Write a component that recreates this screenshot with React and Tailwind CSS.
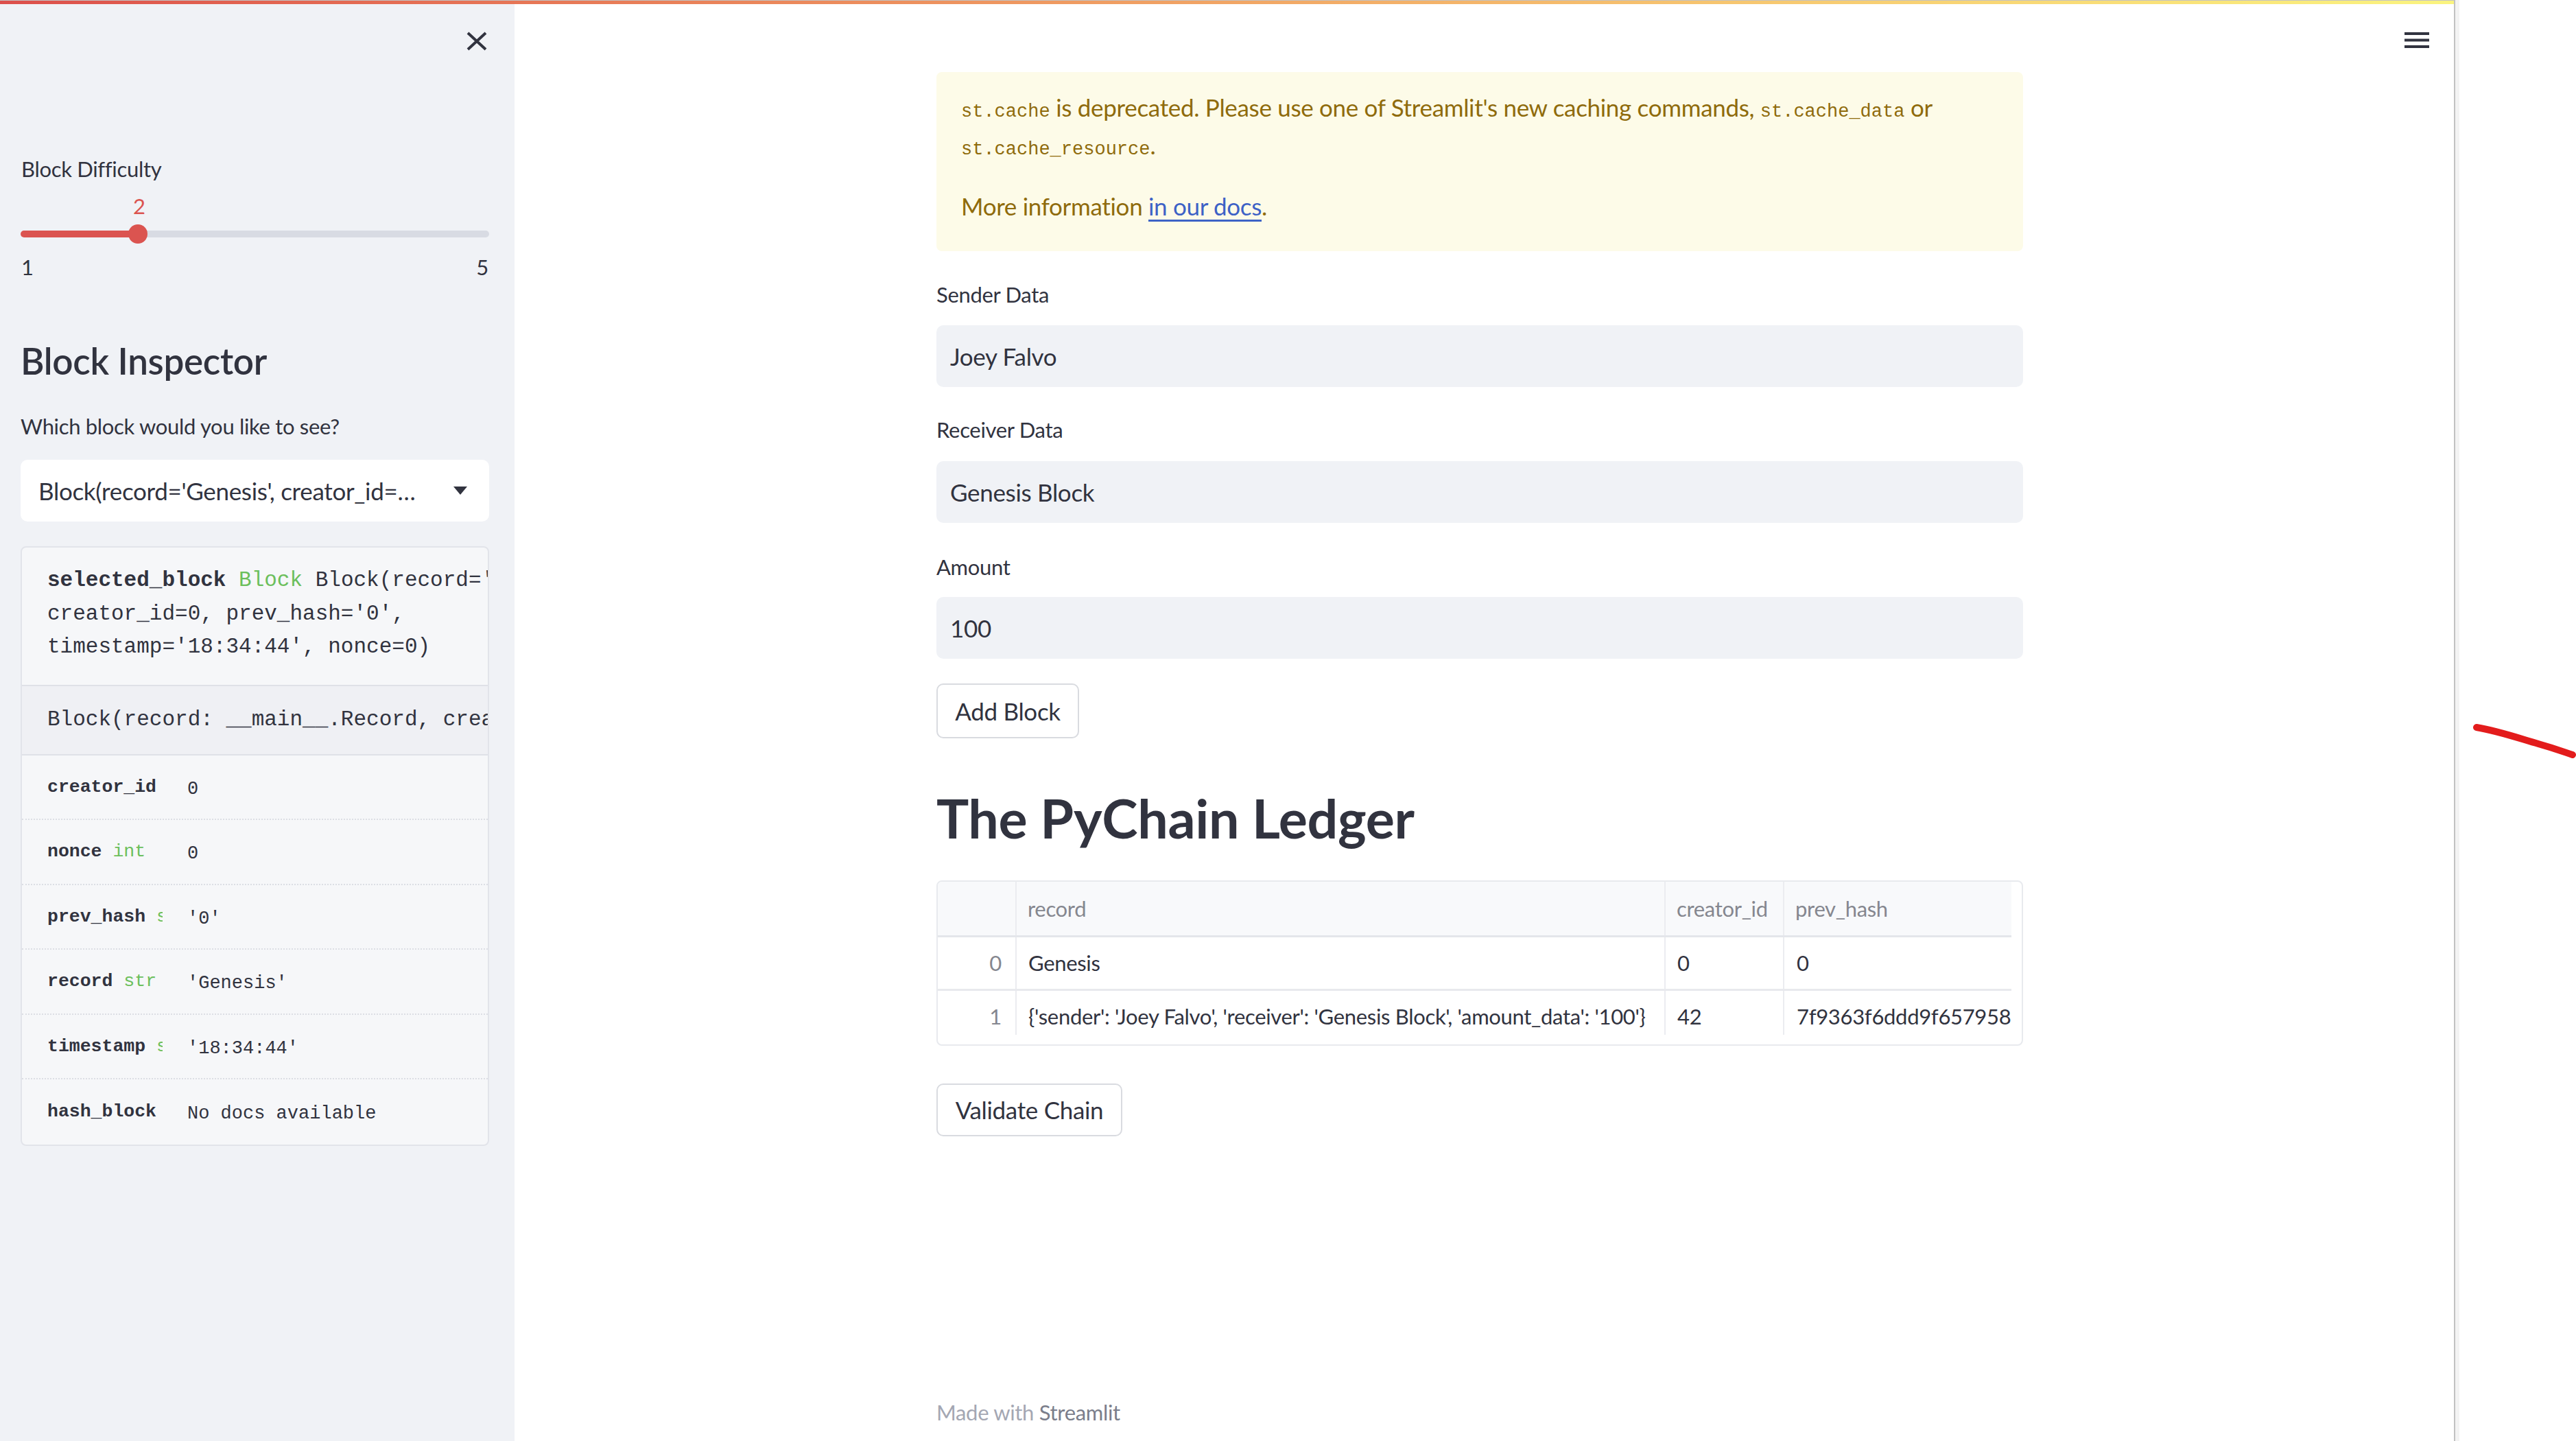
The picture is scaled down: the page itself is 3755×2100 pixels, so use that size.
import React from 'react';

const sans = "font-['Lato','Liberation_Sans',sans-serif] tracking-[-0.02em]";
const mono = "font-['Liberation_Mono','DejaVu_Sans_Mono',monospace] tracking-normal";

const inspectRows = [
    { name: 'creator_id', type: '', value: '0' },
    { name: 'nonce', type: 'int', value: '0' },
    { name: 'prev_hash', type: 'str', value: "'0'" },
    { name: 'record', type: 'str', value: "'Genesis'" },
    { name: 'timestamp', type: 'str', value: "'18:34:44'" },
    { name: 'hash_block', type: '', value: 'No docs available' },
];

const ledger = [
    { idx: 0, record: 'Genesis', creator_id: '0', prev_hash: '0' },
    {
        idx: 1,
        record: "{'sender': 'Joey Falvo', 'receiver': 'Genesis Block', 'amount_data': '100'}",
        creator_id: '42',
        prev_hash: '7f9363f6ddd9f65795879ae0b1b5a2c9',
    },
];

const CloseIcon = () => (
    <svg width="30" height="28" viewBox="0 0 30 28">
        <path d="M2 2 L28 26 M28 2 L2 26" stroke="#31333f" strokeWidth="4" strokeLinecap="butt" />
    </svg>
);

const MenuIcon = () => (
    <svg width="36" height="24" viewBox="0 0 36 24">
        <rect x="0" y="0" width="36" height="4" fill="#31333f" />
        <rect x="0" y="9.5" width="36" height="4" fill="#31333f" />
        <rect x="0" y="19" width="36" height="4" fill="#31333f" />
    </svg>
);

const Sidebar = () => (
    <aside className={`w-[750px] shrink-0 bg-[#f0f2f6] flex flex-col pl-[30px] pr-[37px] text-[#31333f] ${sans}`}>
        <div className="h-[108px] flex items-center justify-end pr-[3px]">
            <CloseIcon />
        </div>

        <div className="mt-[112px] text-[31px] leading-[40px] pl-[1px]">Block Difficulty</div>

        {/* slider */}
        <div className="mt-[14px] text-[31px] leading-[40px] text-[#db5450] pl-[164px]">2</div>
        <div className="mt-[7px] h-[27px] flex items-center">
            <div className="w-[171px] h-[10px] rounded-l-full bg-[#db5450]" />
            <div className="relative z-10 w-[28px] h-[28px] -ml-[14px] rounded-full bg-[#db5450]" />
            <div className="flex-1 h-[10px] -ml-[14px] rounded-r-full bg-[#d8dbe3]" />
        </div>
        <div className="mt-[15px] flex justify-between text-[31px] leading-[40px] px-[1px]">
            <span>1</span>
            <span>5</span>
        </div>

        <h2 className="mt-[83px] text-[53px] leading-[68px] font-semibold">Block Inspector</h2>
        <div className="mt-[41px] text-[31px] leading-[40px]">Which block would you like to see?</div>

        {/* selectbox */}
        <div className="mt-[29px] h-[90px] bg-white rounded-[10px] flex items-center pl-[26px] pr-[32px]">
            <div className="flex-1 min-w-0 truncate text-[35px] leading-[50px]">
                Block(record='Genesis', creator_id=0, prev_hash='0', timestamp='18:34:44', nonce=0)
            </div>
            <svg width="20" height="12" viewBox="0 0 20 12" className="ml-[40px] shrink-0">
                <path d="M0 0 L20 0 L10 12 Z" fill="#31333f" />
            </svg>
        </div>

        {/* help / inspect box */}
        <div className={`mt-[36px] border-2 border-[#e2e4ea] rounded-[8px] bg-[#f6f7f9] overflow-hidden ${mono}`}>
            <div className="pl-[37px] pt-[24px] pb-[30px] text-[31px] leading-[48.5px] whitespace-nowrap overflow-hidden">
                <div>
                    <span className="font-bold">selected_block</span>{' '}
                    <span className="text-[#6cbf5c]">Block</span> Block(record='Genesis',
                </div>
                <div>creator_id=0, prev_hash='0',</div>
                <div>timestamp='18:34:44', nonce=0)</div>
            </div>
            <div className="h-[103px] border-t-2 border-b-2 border-[#dfe1e7] bg-[#eff0f4] flex items-center pl-[37px] text-[31px] leading-[48.5px] whitespace-nowrap overflow-hidden">
                Block(record: __main__.Record, creator_id: int, prev_hash: str = '0', timestamp: str)
            </div>
            {inspectRows.map((row, i) => (
                <div
                    key={row.name}
                    className={`h-[94.5px] flex items-center pl-[37px] ${i < inspectRows.length - 1 ? 'border-b-2 border-dotted border-[#dcdee4]' : ''}`}
                >
                    <div className="w-[168px] shrink-0 overflow-hidden whitespace-nowrap text-[26.5px] leading-[36px] font-bold">
                        {row.name}
                        {row.type && <span className="font-normal text-[#6cbf5c]"> {row.type}</span>}
                    </div>
                    <div className="ml-[36px] text-[27px] leading-[36px] pt-[6px] whitespace-nowrap">{row.value}</div>
                </div>
            ))}
        </div>
    </aside>
);

const Label = ({ children, className = '' }) => (
    <div className={`text-[31px] leading-[50px] ${className}`}>{children}</div>
);

const Input = ({ value, className = '' }) => (
    <div className={`h-[90px] rounded-[10px] bg-[#f0f2f6] flex items-center pl-[20px] text-[35px] ${className}`}>{value}</div>
);

const Button = ({ children, className = '' }) => (
    <button className={`border-2 border-[#d9dbe0] rounded-[10px] bg-white text-[35px] text-[#31333f] flex items-center justify-center ${className}`}>
        {children}
    </button>
);

const Ledger = () => (
    <div className="mt-[40px] h-[241px] border-2 border-[#e8eaee] rounded-[8px] overflow-hidden">
        <div className="w-[1565px] h-[223px] overflow-hidden text-[31px]">
            <div className="flex h-[81px] bg-[#f8f9fb] border-b-[3px] border-[#e4e6eb] text-[#85878f]">
                <div className="w-[115px] shrink-0 border-r-2 border-[#ebecf0]" />
                <div className="w-[946px] shrink-0 border-r-2 border-[#ebecf0] flex items-center pl-[16px]">record</div>
                <div className="w-[173px] shrink-0 border-r-2 border-[#ebecf0] flex items-center pl-[16px]">creator_id</div>
                <div className="w-[331px] shrink-0 flex items-center pl-[16px]">prev_hash</div>
            </div>
            {ledger.map((row) => (
                <div key={row.idx} className="flex h-[78px] border-b-[3px] border-[#e8e9ed]">
                    <div className="w-[115px] shrink-0 border-r-2 border-[#ebecf0] flex items-center justify-end pr-[20px] text-[#85878f]">
                        {row.idx}
                    </div>
                    <div className="w-[946px] shrink-0 border-r-2 border-[#ebecf0] flex items-center pl-[17px] whitespace-nowrap overflow-hidden">
                        {row.record}
                    </div>
                    <div className="w-[173px] shrink-0 border-r-2 border-[#ebecf0] flex items-center pl-[17px]">{row.creator_id}</div>
                    <div className="w-[331px] shrink-0 flex items-center pl-[18px] whitespace-nowrap overflow-hidden">{row.prev_hash}</div>
                </div>
            ))}
        </div>
    </div>
);

const Main = () => (
    <main className={`flex-1 relative bg-white text-[#31333f] ${sans}`}>
        <div className="absolute right-[36px] top-[41px]">
            <MenuIcon />
        </div>

        <div className="ml-[615px] w-[1584px] flex flex-col pt-[99px]">
            {/* deprecation warning */}
            <div className="h-[261px] rounded-[8px] bg-[#fdfbe8] pl-[36px] pt-[24px] text-[35px] leading-[55px] text-[#8f6b0c]">
                <div className="whitespace-nowrap">
                    <code className={`${mono} text-[27px] leading-none`}>st.cache</code> is deprecated. Please use one of Streamlit's new caching commands,{' '}
                    <code className={`${mono} text-[27px] leading-none`}>st.cache_data</code> or
                </div>
                <div>
                    <code className={`${mono} text-[27px] leading-none`}>st.cache_resource</code>.
                </div>
                <div className="mt-[34px]">
                    More information <span className="text-[#3d62c6] underline underline-offset-[6px] decoration-[3px]">in our docs</span>.
                </div>
            </div>

            <Label className="mt-[38px]">Sender Data</Label>
            <Input className="mt-[20px]" value="Joey Falvo" />
            <Label className="mt-[37px]">Receiver Data</Label>
            <Input className="mt-[21px]" value="Genesis Block" />
            <Label className="mt-[39px]">Amount</Label>
            <Input className="mt-[19px]" value="100" />

            <Button className="mt-[36px] w-[208px] h-[80px]">Add Block</Button>

            <h1 className="mt-[64px] text-[79px] leading-[103px] font-bold">The PyChain Ledger</h1>

            <Ledger />

            <Button className="mt-[55px] w-[271px] h-[77px]">Validate Chain</Button>

            <div className="mt-[382px] text-[31px] leading-[40px] text-[#a4a7b3]">
                Made with <span className="text-[#7b7e8b]">Streamlit</span>
            </div>
        </div>
    </main>
);

export default function App() {
    return (
        <div className="w-[3755px] h-[2100px] flex bg-white overflow-hidden">
            <div className="w-[3577px] shrink-0 flex flex-col">
                <div className="h-[6px] shrink-0 border-t border-[#c3c3c3] bg-gradient-to-r from-[#dc4f4b] to-[#faf47f]" />
                <div className="flex-1 flex">
                    <Sidebar />
                    <Main />
                </div>
            </div>
            {/* browser scrollbar gutter */}
            <div className="w-[8px] shrink-0 flex">
                <div className="w-[2px] bg-[#c2c2c2]" />
                <div className="flex-1 bg-[#f3f3f3]" />
            </div>
            {/* blank area with a stray pen mark */}
            <div className="flex-1 relative bg-white">
                <svg className="absolute left-0 top-[1040px]" width="170" height="80" viewBox="0 0 170 80">
                    <path
                        d="M25 20 C60 26 90 37 115 44 S150 55 165 60"
                        fill="none"
                        stroke="#e31c1c"
                        strokeWidth="10"
                        strokeLinecap="round"
                    />
                </svg>
            </div>
        </div>
    );
}
